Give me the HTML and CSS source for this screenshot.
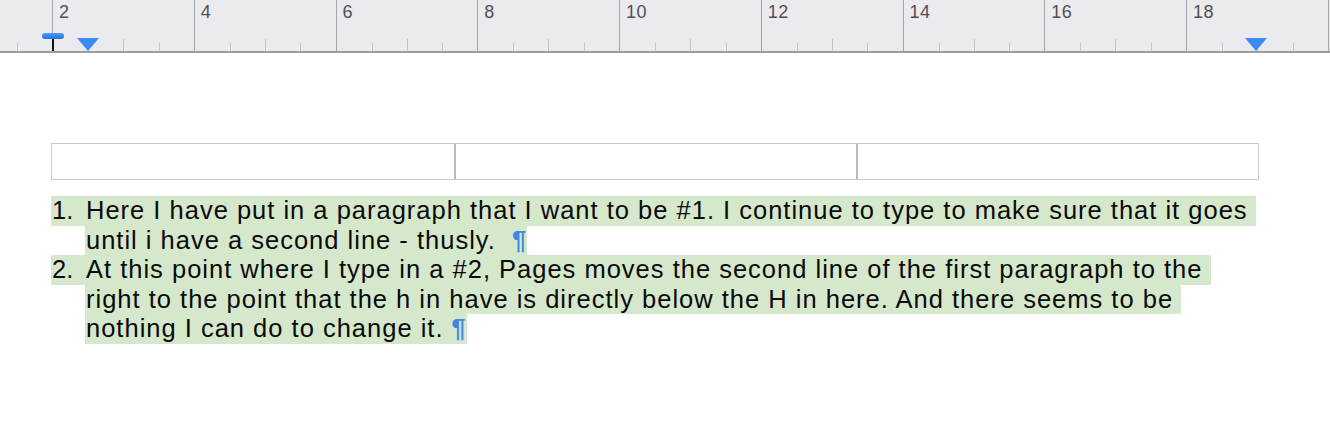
FILE: index.html
```html
<!DOCTYPE html>
<html>
<head>
<meta charset="utf-8">
<link rel="stylesheet" href="styles.css">
</head>
<body>
<div class="ruler">
  <div class="scale">
    <div class="seg"></div>
    <div class="seg"><span class="n">2</span></div>
    <div class="seg"><span class="n">4</span></div>
    <div class="seg"><span class="n">6</span></div>
    <div class="seg"><span class="n">8</span></div>
    <div class="seg"><span class="n">10</span></div>
    <div class="seg"><span class="n">12</span></div>
    <div class="seg"><span class="n">14</span></div>
    <div class="seg"><span class="n">16</span></div>
    <div class="seg"><span class="n">18</span></div>
    <div class="seg"></div>
  </div>
  <div class="tab-stop"><span class="tab-bar"></span><span class="tab-stem"></span></div>
  <div class="tri tri-left"></div>
  <div class="tri tri-right"></div>
</div>
<div class="page">
  <div class="table">
    <div class="cell"></div>
    <div class="cell"></div>
    <div class="cell"></div>
  </div>
  <div class="list">
    <div class="item">
      <div class="num">1.</div>
      <div class="lines">
        <div class="line">Here I have put in a paragraph that I want to be #1. I continue to type to make sure that it goes </div>
        <div class="line">until i have a second line - thusly.  <span class="pil">¶</span></div>
      </div>
    </div>
    <div class="item">
      <div class="num">2.</div>
      <div class="lines">
        <div class="line">At this point where I type in a #2, Pages moves the second line of the first paragraph to the </div>
        <div class="line">right to the point that the h in have is directly below the H in here. And there seems to be </div>
        <div class="line">nothing I can do to change it. <span class="pil">¶</span></div>
      </div>
    </div>
  </div>
</div>
</body>
</html>
```
FILE: styles.css
```css
html, body {
  margin: 0;
  padding: 0;
  background: #ffffff;
}
body {
  width: 1330px;
  height: 424px;
  overflow: hidden;
  font-family: "Liberation Sans", Arial, sans-serif;
}
.ruler {
  position: relative;
  height: 51px;
  background: #ebeaef;
  border-bottom: 2px solid #9d9d9f;
  overflow: hidden;
}
.scale {
  display: flex;
  margin-left: -89.75px;
  height: 51px;
}
.seg {
  flex: 0 0 141.75px;
  box-sizing: border-box;
  height: 51px;
  border-left: 1px solid #a6a6a9;
  background:
    linear-gradient(#c4c4c7, #c4c4c7) 35px 43px / 1px 8px no-repeat,
    linear-gradient(#c4c4c7, #c4c4c7) 70px 39px / 1px 12px no-repeat,
    linear-gradient(#c4c4c7, #c4c4c7) 105.5px 43px / 1px 8px no-repeat;
}
.n {
  display: block;
  padding-left: 6px;
  padding-top: 1px;
  font-size: 18px;
  letter-spacing: 0.4px;
  line-height: 22px;
  color: #505053;
}
.tab-stop {
  position: absolute;
  left: 42px;
  top: 33px;
  width: 22px;
  height: 19px;
}
.tab-bar {
  position: absolute;
  left: 0;
  top: 0;
  width: 22px;
  height: 6px;
  border-radius: 3px;
  background: linear-gradient(#4f9cf5, #1e73dc);
}
.tab-stem {
  position: absolute;
  left: 10px;
  top: 6px;
  width: 2px;
  height: 13px;
  background: #111;
}
.tri {
  position: absolute;
  top: 38px;
  width: 0;
  height: 0;
  border-left: 11px solid transparent;
  border-right: 11px solid transparent;
  border-top: 13px solid #3b8bef;
}
.tri-left { left: 77px; }
.tri-right { left: 1245px; }

.page {
  padding: 90px 0 0 51px;
}
.table {
  display: grid;
  grid-template-columns: repeat(3, 1fr);
  width: 1208px;
  height: 37px;
  box-sizing: border-box;
  border: 1.5px solid #cacbcc;
}
.cell {
  border-left: 2px solid #b7bbbf;
}
.cell:first-child {
  border-left: none;
}
.list {
  margin-top: 16px;
  font-size: 25.5px;
  letter-spacing: 1px;
  line-height: 29.6px;
  color: #0a0a0a;
}
.item {
  display: flex;
}
.num {
  flex: 0 0 34px;
  height: 29.6px;
  background: #d5e8cb;
  padding-left: 1px;
  box-sizing: border-box;
  letter-spacing: 0;
}
.lines {
  display: flex;
  flex-direction: column;
  align-items: flex-start;
}
.line {
  white-space: pre;
  background: #d5e8cb;
  padding-left: 1px;
}
.pil {
  color: #3f86e6;
  font-weight: bold;
}
```
